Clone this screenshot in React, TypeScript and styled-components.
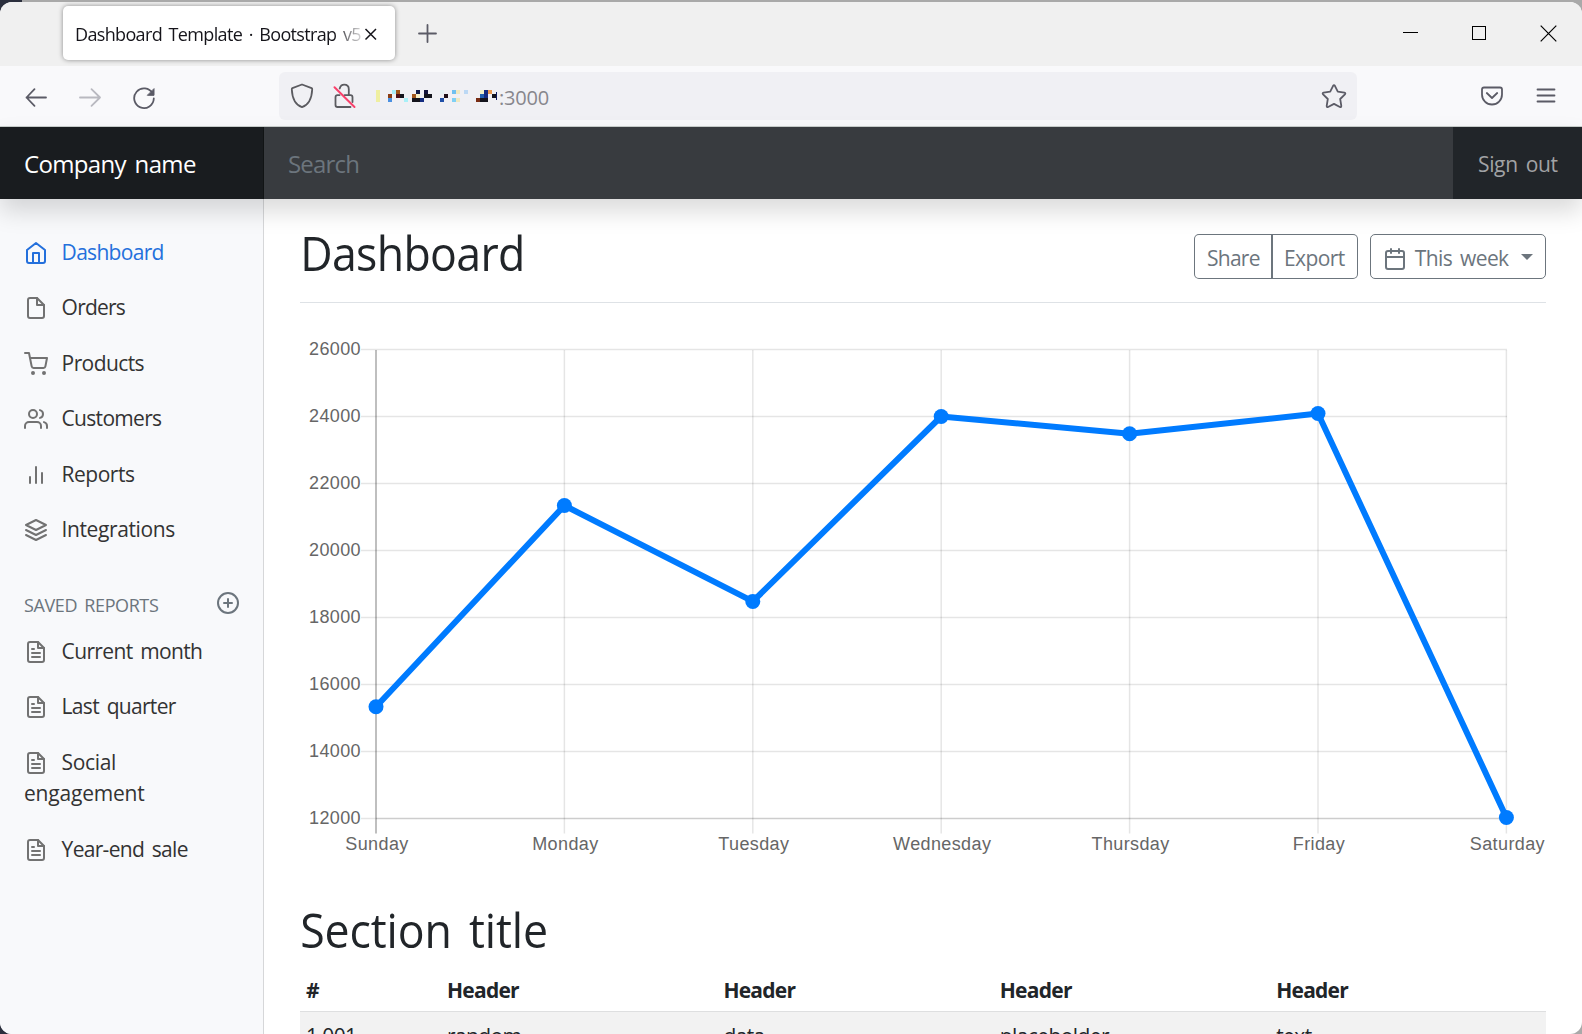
import React from "react";
import styled, { createGlobalStyle } from "styled-components";

const UI = `"Open Sans", "Noto Sans", sans-serif`;

const Global = createGlobalStyle`
  * { box-sizing: border-box; }
  body { margin: 0; background: #a9a9a9; overflow: hidden; }
  #root { font-family: ${UI}; }
`;

const Desktop = styled.div`
  width: 1582px;
  height: 1034px;
  padding-top: 2px;
  overflow: hidden;
  background: linear-gradient(90deg, #2b2f3d 0 22px, #a9a9a9 22px);
`;

const Window = styled.div`
  display: flex;
  flex-direction: column;
  height: 1032px;
  border-radius: 12px;
  overflow: hidden;
  background: #fff;
`;

const Text = styled.span<{ $ls?: number; $ws?: number }>`
  letter-spacing: ${(p) => p.$ls ?? 0}px;
  word-spacing: ${(p) => p.$ws ?? 0}px;
  white-space: nowrap;
`;

/* ---------- browser chrome ---------- */

const TitleBar = styled.header`
  display: flex;
  align-items: center;
  height: 64px;
  background: #f0f0f0;
  padding: 0 25px 2px 63px;
`;

const Tab = styled.div`
  display: flex;
  align-items: center;
  width: 332px;
  height: 54px;
  padding: 2px 18px 0 12px;
  border-radius: 5px;
  background: #fff;
  box-shadow: 0 0 5px rgba(0, 0, 0, 0.42);
`;

const TabTitle = styled.div`
  width: 289px;
  overflow: hidden;
  font-size: 18px;
  line-height: 30px;
  color: #15141a;
  mask-image: linear-gradient(90deg, #000 258px, transparent 292px);
`;

const NewTab = styled.div`
  display: flex;
  margin-left: 23px;
`;

const Controls = styled.div`
  display: flex;
  align-items: center;
  gap: 52px;
  margin-left: auto;
`;

const Toolbar = styled.div`
  display: flex;
  align-items: center;
  height: 61px;
  padding: 0 26px 0 24px;
  background: #f9f9fb;
  border-bottom: 1px solid #c9cfcc;
`;

const NavButtons = styled.div`
  display: flex;
  align-items: center;
  gap: 30px;
  width: 255px;
  padding-top: 1px;
`;

const UrlBar = styled.div`
  display: flex;
  align-items: center;
  width: 1078px;
  height: 48px;
  padding: 0 10px 0 11px;
  border-radius: 6px;
  background: #f0f0f4;
`;

const UrlIcons = styled.div`
  display: flex;
  gap: 18px;
  width: 86px;
`;

const Mosaic = styled.svg`
  display: block;
`;

const Port = styled.span`
  font-size: 20px;
  line-height: 30px;
  color: #87868c;
  letter-spacing: -0.2px;
  padding-top: 3px;
`;

const StarSlot = styled.div`
  display: flex;
  margin-left: auto;
`;

const ToolIcons = styled.div`
  display: flex;
  align-items: center;
  gap: 32px;
  margin-left: auto;
`;

/* ---------- page ---------- */

const Navbar = styled.nav`
  position: relative;
  z-index: 2;
  display: flex;
  flex: none;
  height: 72px;
  background: #212529;
  box-shadow: 0 12px 24px rgba(0, 0, 0, 0.15);
`;

const Brand = styled.div`
  width: 264px;
  padding: 0 24px;
  font-size: 24px;
  line-height: 74px;
  color: #fff;
  background: #191c1f;
  box-shadow: inset -1px 0 0 #111415;
`;

const SearchBox = styled.div`
  flex: 1;
  padding: 0 24px;
  font-size: 24px;
  line-height: 74px;
  color: #6c757d;
  background: #383b3f;
`;

const SignOut = styled.div`
  width: 129px;
  padding-left: 25px;
  font-size: 21px;
  line-height: 75px;
  color: #a1a3a5;
`;

const Body = styled.div`
  display: flex;
  flex: 1;
  min-height: 0;
`;

const Sidebar = styled.aside`
  width: 264px;
  flex: none;
  padding-top: 25.6px;
  background: #f8f9fb;
  border-right: 1px solid #d6d7d9;
`;

const NavItem = styled.div<{ $active?: boolean }>`
  padding: 12px 24px;
  font-size: 21px;
  line-height: 31.5px;
  color: ${(p) => (p.$active ? "#2470dc" : "#333")};
  svg {
    width: 24px;
    height: 24px;
    margin-right: 13.6px;
    vertical-align: -5px;
    color: ${(p) => (p.$active ? "#2470dc" : "#727272")};
  }
`;

const SavedHeading = styled.div`
  display: flex;
  justify-content: space-between;
  align-items: center;
  height: 66px;
  padding: 29px 23px 0 24px;
  font-size: 18px;
  line-height: 27px;
  color: #6c757d;
  svg {
    margin-bottom: 4px;
  }
`;

const Main = styled.main`
  flex: 1;
  padding: 0 36px;
  overflow: hidden;
`;

const PageHeader = styled.div`
  display: flex;
  justify-content: space-between;
  align-items: flex-start;
  height: 104px;
  border-bottom: 1px solid #dee2e6;
`;

const Title = styled.h1`
  margin: 25px 0 0;
  font-size: 48px;
  font-weight: 400;
  line-height: 58px;
  color: #212529;
  transform: scaleX(0.93);
  transform-origin: 2px 50%;
`;

const SectionTitle = styled(Title)`
  margin: 3px 0 8px;
`;

const Actions = styled.div`
  display: flex;
  gap: 12px;
  margin-top: 35px;
`;

const ButtonGroup = styled.div`
  display: flex;
`;

const Button = styled.button<{ $w: number; $side?: "left" | "right" }>`
  display: flex;
  align-items: center;
  width: ${(p) => p.$w}px;
  height: 45px;
  padding: 4px 0 0 ${(p) => (p.$side === "right" ? 11 : 12)}px;
  border: 1px solid #6c757d;
  border-right-width: ${(p) => (p.$side === "left" ? 2 : 1)}px;
  border-left-width: ${(p) => (p.$side === "right" ? 0 : 1)}px;
  border-radius: ${(p) =>
    p.$side === "left" ? "5px 0 0 5px" : p.$side === "right" ? "0 5px 5px 0" : "5px"};
  background: transparent;
  color: #6c757d;
  font: 400 21px/31px ${UI};
`;

const Caret = styled.i`
  margin: -4px 0 0 12px;
  border: 6px solid transparent;
  border-top-color: #6c757d;
  border-bottom: 0;
`;

const ChartSvg = styled.svg`
  display: block;
  font: 18px "Liberation Sans", Arial, sans-serif;
  letter-spacing: 0.38px;
`;

const Row = styled.div<{ $head?: boolean }>`
  display: grid;
  grid-template-columns: 141px repeat(3, 276.4px) 1fr;
  height: ${(p) => (p.$head ? 45 : 44)}px;
  padding-top: ${(p) => (p.$head ? 8 : 9)}px;
  font-size: 21px;
  font-weight: ${(p) => (p.$head ? 700 : 400)};
  line-height: 31.5px;
  color: #212529;
  background: ${(p) => (p.$head ? "transparent" : "#f2f2f2")};
  border-bottom: 1px solid #dedfe0;
`;

const Cell = styled.div`
  padding-left: 6px;
`;

/* ---------- icons ---------- */

const Feather = ({ children, size = 24 }: { children: React.ReactNode; size?: number }) => (
  <svg width={size} height={size} viewBox="0 0 24 24" fill="none" stroke="currentColor" strokeWidth="2" strokeLinecap="round" strokeLinejoin="round">
    {children}
  </svg>
);

const icons: Record<string, React.ReactNode> = {
  home: (
    <>
      <path d="M3 9l9-7 9 7v11a2 2 0 0 1-2 2H5a2 2 0 0 1-2-2z" />
      <polyline points="9 22 9 12 15 12 15 22" />
    </>
  ),
  file: (
    <>
      <path d="M13 2H6a2 2 0 0 0-2 2v16a2 2 0 0 0 2 2h12a2 2 0 0 0 2-2V9z" />
      <polyline points="13 2 13 9 20 9" />
    </>
  ),
  cart: (
    <>
      <circle cx="9" cy="21" r="1" />
      <circle cx="20" cy="21" r="1" />
      <path d="M1 1h4l2.68 13.39a2 2 0 0 0 2 1.61h9.72a2 2 0 0 0 2-1.61L23 6H6" />
    </>
  ),
  users: (
    <>
      <path d="M17 21v-2a4 4 0 0 0-4-4H5a4 4 0 0 0-4 4v2" />
      <circle cx="9" cy="7" r="4" />
      <path d="M23 21v-2a4 4 0 0 0-3-3.87" />
      <path d="M16 3.13a4 4 0 0 1 0 7.75" />
    </>
  ),
  bars: (
    <>
      <line x1="18" y1="20" x2="18" y2="10" />
      <line x1="12" y1="20" x2="12" y2="4" />
      <line x1="6" y1="20" x2="6" y2="14" />
    </>
  ),
  layers: (
    <>
      <polygon points="12 2 2 7 12 12 22 7 12 2" />
      <polyline points="2 17 12 22 22 17" />
      <polyline points="2 12 12 17 22 12" />
    </>
  ),
  fileText: (
    <>
      <path d="M14 2H6a2 2 0 0 0-2 2v16a2 2 0 0 0 2 2h12a2 2 0 0 0 2-2V8z" />
      <polyline points="14 2 14 8 20 8" />
      <line x1="16" y1="13" x2="8" y2="13" />
      <line x1="16" y1="17" x2="8" y2="17" />
      <polyline points="10 9 9 9 8 9" />
    </>
  ),
  plusCircle: (
    <>
      <circle cx="12" cy="12" r="10" />
      <line x1="12" y1="8" x2="12" y2="16" />
      <line x1="8" y1="12" x2="16" y2="12" />
    </>
  ),
  calendar: (
    <>
      <rect x="3" y="4" width="18" height="18" rx="2" ry="2" />
      <line x1="16" y1="2" x2="16" y2="6" />
      <line x1="8" y1="2" x2="8" y2="6" />
      <line x1="3" y1="10" x2="21" y2="10" />
    </>
  ),
};

const chrome = { fill: "none", stroke: "#5b5b66", strokeWidth: 1.8, strokeLinecap: "round", strokeLinejoin: "round" } as const;

/* ---------- redacted host blocks: column, row, colour ---------- */

const blocks: [number, number, string][] = [
  [0, 0, "#efefa0"], [0, 1, "#efefa0"], [0, 2, "#efefa0"],
  [3, 1, "#8a3d14"], [3, 2, "#4a90e2"], [4, 0, "#a8ecf8"], [5, 0, "#a0561c"], [5, 1, "#4c1018"], [6, 1, "#14141c"], [7, 2, "#a8f0f8"],
  [9, 1, "#a0561c"], [9, 2, "#14141c"], [10, 0, "#101c48"], [10, 1, "#f5f0c8"], [10, 2, "#14141c"], [11, 2, "#142c80"],
  [12, 0, "#14143c"], [12, 1, "#14141c"], [13, 1, "#14141c"],
  [16, 0, "#e6f3f4"], [16, 2, "#2050a8"], [17, 1, "#201018"],
  [19, 0, "#70c0f0"], [19, 2, "#80d0f4"], [20, 0, "#f0e8c0"], [20, 2, "#f0e8c0"], [22, 0, "#bcd8f4"],
  [25, 2, "#782c14"], [26, 0, "#f0f0c8"], [26, 1, "#2060b0"], [26, 2, "#14141c"], [27, 0, "#142c80"], [27, 1, "#142c80"], [27, 2, "#14141c"],
  [28, 0, "#e89850"], [29, 1, "#14141c"],
];

/* ---------- chart ---------- */

const days = ["Sunday", "Monday", "Tuesday", "Wednesday", "Thursday", "Friday", "Saturday"];
const values = [15339, 21345, 18483, 24003, 23489, 24092, 12034];
const ticks = [26000, 24000, 22000, 20000, 18000, 16000, 14000, 12000];
const px = (i: number) => 376 + i * 188.4;
const py = (v: number) => 818.6 - ((v - 12000) * 67) / 2000;

const Chart = () => (
  <ChartSvg width="1246" height="595" viewBox="300 303 1246 595">
    <g stroke="#000" strokeOpacity="0.1" strokeWidth="1.5">
      {ticks.map((t) => (
        <line key={t} x1="361" x2="1507" y1={py(t)} y2={py(t)} />
      ))}
      {days.map((d, i) => (
        <line key={d} x1={px(i)} x2={px(i)} y1="350" y2="833.5" />
      ))}
      <line x1="376" x2="376" y1="350" y2="833.5" strokeOpacity="0.25" />
      <line x1="376" x2="1507" y1="818.6" y2="818.6" />
    </g>
    <g fill="#666">
      {ticks.map((t) => (
        <text key={t} x="361" y={py(t) + 5.6} textAnchor="end">{t}</text>
      ))}
      {days.map((d, i) => (
        <text key={d} x={px(i) + 1} y="849.7" textAnchor="middle">{d}</text>
      ))}
    </g>
    <polyline fill="none" stroke="#007bff" strokeWidth="6" strokeLinejoin="round" points={values.map((v, i) => `${px(i)},${py(v)}`).join(" ")} />
    {values.map((v, i) => (
      <circle key={v} cx={px(i)} cy={py(v)} r="7.5" fill="#007bff" />
    ))}
  </ChartSvg>
);

const links: [string, string, number][] = [
  ["home", "Dashboard", -0.7],
  ["file", "Orders", -0.8],
  ["cart", "Products", -0.6],
  ["users", "Customers", -0.7],
  ["bars", "Reports", -0.5],
  ["layers", "Integrations", -0.4],
];
const reports: [string, number, number][] = [
  ["Current month", -0.65, 3],
  ["Last quarter", -0.7, 3],
  ["Social", -0.35, 0],
  ["Year-end sale", -0.7, 3],
];

export default function App() {
  return (
    <Desktop>
      <Global />
      <Window>
        <TitleBar>
          <Tab>
            <TabTitle>
              <Text $ls={-0.65} $ws={2.5}>Dashboard Template · Bootstrap v5</Text>
            </TabTitle>
            <svg width="13" height="13" viewBox="0 0 13 13" fill="none" stroke="#15141a" strokeWidth="1.5">
              <path d="M1.5 1L12 11.5M12 1L1.5 11.5" />
            </svg>
          </Tab>
          <NewTab>
            <svg width="19" height="19" viewBox="0 0 19 19" {...chrome}>
              <path d="M9.5 1v17M1 9.5h17" />
            </svg>
          </NewTab>
          <Controls>
            <svg width="17" height="17" viewBox="0 0 17 17" stroke="#000" strokeWidth="1"><path d="M1 7.5h15" /></svg>
            <svg width="17" height="17" viewBox="0 0 17 17" fill="none" stroke="#000" strokeWidth="1"><rect x="1.5" y="1.5" width="13" height="13" /></svg>
            <svg width="17" height="17" viewBox="0 0 17 17" fill="none" stroke="#000" strokeWidth="1.2"><path d="M.7.7l15.6 15.6M16.3.7L.7 16.3" /></svg>
          </Controls>
        </TitleBar>
        <Toolbar>
          <NavButtons>
            <svg width="24" height="24" viewBox="0 0 24 24" {...chrome}><path d="M22 12.500H2.500M10.500 4.200L2.500 12.500L10.500 20.800" /></svg>
            <svg width="24" height="24" viewBox="0 0 24 24" {...chrome} stroke="#b9b9c0"><path d="M2 12.500H22M13.500 4.200L22 12.500L13.500 20.800" /></svg>
            <svg width="24" height="24" viewBox="0 0 24 24" {...chrome}>
              <path d="M20.600 8.500A9.800 9.800 0 1 0 21.800 13.500" />
              <path d="M22 4v6.300h-6.300z" fill="#5b5b66" strokeWidth="1" />
            </svg>
          </NavButtons>
          <UrlBar>
            <UrlIcons>
              <svg width="24" height="26" viewBox="0 0 24 26" {...chrome} stroke="#5b5b60">
                <path d="M12 1.500L21.600 5.200Q22.300 5.500 22.200 6.500C21.800 15 19.500 21.500 12 24.200C4.500 21.500 2.200 15 1.800 6.500Q1.700 5.500 2.400 5.200Z" />
              </svg>
              <svg width="24" height="26" viewBox="0 0 24 26" {...chrome} stroke="#5b5b60">
                <path d="M7.500 12.200H5.500Q3.500 12.200 3.500 14.200V22Q3.500 24 5.500 24H18.500M12.500 12.200H18.500Q20.500 12.200 20.500 14.200V19M7.700 5.500Q8.800 1.700 12.200 1.700Q16.800 1.700 16.800 6.300V12" />
                <path d="M2.500 4.200L22.500 24" stroke="#f9416b" strokeWidth="2" />
              </svg>
            </UrlIcons>
            <Mosaic width="123" height="12" viewBox="0 0 123 12" shapeRendering="crispEdges">
              {blocks.map(([c, r, f]) => (
                <rect key={`${c}-${r}`} x={c * 4} y={r * 4} width="4" height="4" fill={f} />
              ))}
              <path d="M120 1q3 5 0 10z" fill="#101c60" />
            </Mosaic>
            <Port>:3000</Port>
            <StarSlot>
              <svg width="26" height="26" viewBox="0 0 26 26" {...chrome}>
                <path d="M12.1 2.800Q13 1.300 13.900 2.800L16.800 8.700L23.400 9.700Q25 10.100 23.900 11.300L19.200 16L20.300 22.900Q20.400 24.500 18.900 24L13 20.900L7.100 24Q5.600 24.500 5.700 22.900L6.800 16L2.100 11.300Q1 10.100 2.600 9.700L9.200 8.700Z" />
              </svg>
            </StarSlot>
          </UrlBar>
          <ToolIcons>
            <svg width="24" height="22" viewBox="0 0 24 22" {...chrome}>
              <path d="M4 2.500H20Q22 2.500 22 4.500V9.500A10 10 0 0 1 2 9.500V4.500Q2 2.500 4 2.500Z" />
              <path d="M6.800 8L12 13L17.200 8" />
            </svg>
            <svg width="20" height="20" viewBox="0 0 20 20" {...chrome}><path d="M1.500 3.500h17M1.500 9.500h17M1.500 15.500h17" /></svg>
          </ToolIcons>
        </Toolbar>

        <Navbar>
          <Brand><Text $ls={-0.65} $ws={3}>Company name</Text></Brand>
          <SearchBox><Text $ls={-0.8}>Search</Text></SearchBox>
          <SignOut><Text $ls={-0.35} $ws={3}>Sign out</Text></SignOut>
        </Navbar>

        <Body>
          <Sidebar>
            {links.map(([icon, label, ls], i) => (
              <NavItem key={label} $active={i === 0}>
                <Feather>{icons[icon]}</Feather>
                <Text $ls={ls}>{label}</Text>
              </NavItem>
            ))}
            <SavedHeading>
              <Text $ls={-0.4} $ws={3}>SAVED REPORTS</Text>
              <Feather>{icons.plusCircle}</Feather>
            </SavedHeading>
            {reports.map(([label, ls, ws]) => (
              <NavItem key={label}>
                <Feather>{icons.fileText}</Feather>
                <Text $ls={ls} $ws={ws}>{label}</Text>
                {label === "Social" && <> <Text as="div" $ls={-0.2}>engagement</Text></>}
              </NavItem>
            ))}
          </Sidebar>
          <Main>
            <PageHeader>
              <Title><Text $ls={-0.7}>Dashboard</Text></Title>
              <Actions>
                <ButtonGroup>
                  <Button $w={79} $side="left"><Text $ls={-0.75}>Share</Text></Button>
                  <Button $w={85} $side="right"><Text $ls={-0.6}>Export</Text></Button>
                </ButtonGroup>
                <Button $w={176}>
                  <Feather>{icons.calendar}</Feather>
                  <Text $ls={-0.6} $ws={3}>&nbsp;This week</Text>
                  <Caret />
                </Button>
              </Actions>
            </PageHeader>
            <Chart />
            <SectionTitle><Text $ls={-0.1} $ws={6}>Section title</Text></SectionTitle>
            <Row $head>
              {["#", "Header", "Header", "Header", "Header"].map((h, i) => (
                <Cell key={i}><Text $ls={-0.75}>{h}</Text></Cell>
              ))}
            </Row>
            <Row>
              {["1,001", "random", "data", "placeholder", "text"].map((c) => (
                <Cell key={c}><Text $ls={-0.6}>{c}</Text></Cell>
              ))}
            </Row>
          </Main>
        </Body>
      </Window>
    </Desktop>
  );
}
